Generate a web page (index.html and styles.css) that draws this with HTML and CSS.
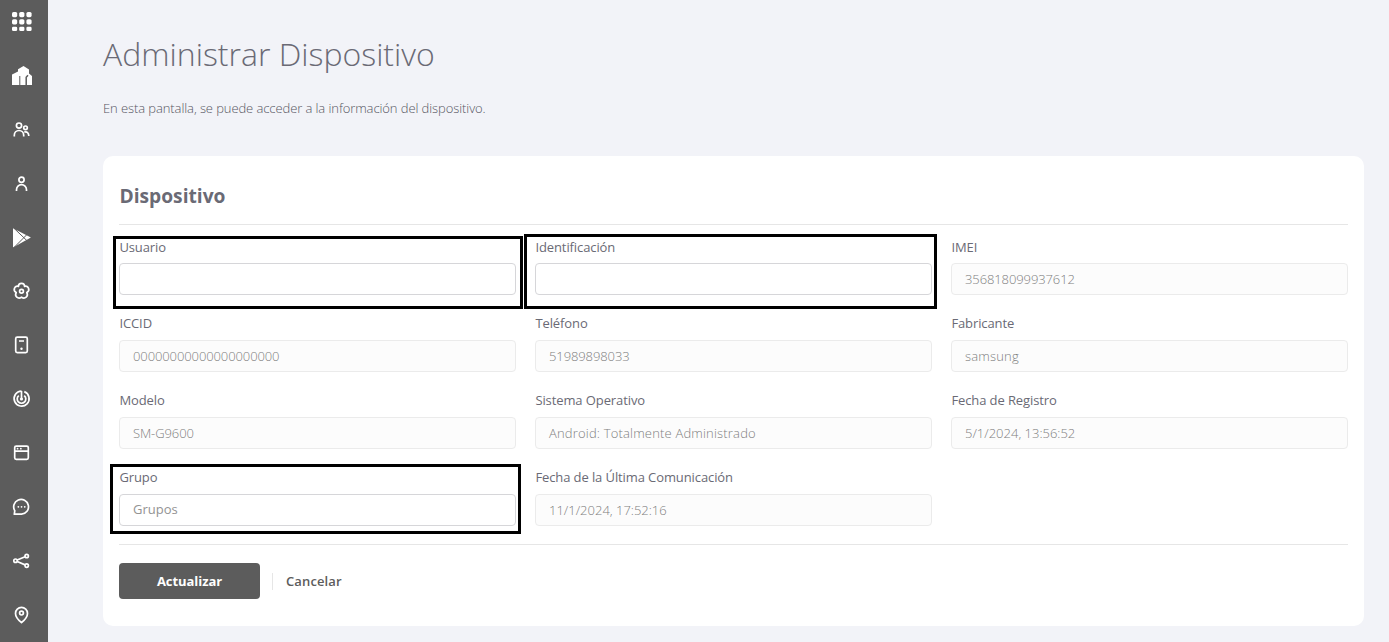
FILE: index.html
```html
<!DOCTYPE html>
<html lang="es">
<head>
<meta charset="utf-8">
<title>Administrar Dispositivo</title>
<link rel="stylesheet" href="styles.css">
</head>
<body>
<div class="app">
  <nav class="sidebar">
    <a class="nav-item"><svg class="icon" viewBox="0 0 24 24"><g class="solid"><rect x="2" y="2" width="5.2" height="5.2" rx="1.6"/><rect x="9.2" y="2" width="5.2" height="5.2" rx="1.6"/><rect x="16.4" y="2" width="5.2" height="5.2" rx="1.6"/><rect x="2" y="9.2" width="5.2" height="5.2" rx="1.6"/><rect x="9.2" y="9.2" width="5.2" height="5.2" rx="1.6"/><rect x="16.4" y="9.2" width="5.2" height="5.2" rx="1.6"/><rect x="2" y="16.7" width="5.2" height="4.4" rx="1.4"/><rect x="9.2" y="16.7" width="5.2" height="4.4" rx="1.4"/><rect x="16.4" y="16.7" width="5.2" height="4.4" rx="1.4"/></g></svg></a>
    <a class="nav-item"><svg class="icon" viewBox="0 0 24 24"><g class="solid"><path d="M2 21V10.500L8 7.500V5.200L13.500 2L19 5.500V9.500L22 12V21Z"/></g><path class="cut" d="M9.800 12V21"/><path class="cut wide" d="M16.200 21V13.200L18 11.300"/></svg></a>
    <a class="nav-item"><svg class="icon shift" viewBox="0 0 24 24"><circle cx="9.500" cy="7.600" r="2.600"/><path d="M4.800 18.600V17.200a4.700 4.700 0 0 1 9.400 0v1.400"/><circle cx="16" cy="9.800" r="1.800"/><path d="M14.800 14.100c2.700-1 4.500.9 4.500 4"/></svg></a>
    <a class="nav-item"><svg class="icon shift" viewBox="0 0 24 24"><circle cx="12" cy="7.800" r="2.600"/><path d="M7 19V17.700a5 5 0 0 1 10 0v1.300"/></svg></a>
    <a class="nav-item"><svg class="icon shift" viewBox="0 0 24 24"><path class="solid" d="M3.500 2.200L21.400 11.600L3.500 21.500Z"/><path class="cut" d="M4 1.800L17.800 15M4 22L17.800 8.200"/></svg></a>
    <a class="nav-item"><svg class="icon shift" viewBox="0 0 24 24"><path d="M8.900 7.400C8.900 3.300 15.100 3.300 15.100 7.400C19 6.200 21 11.600 17.300 13.600C19.300 17.200 15.500 20.500 12 18.200C8.500 20.500 4.700 17.200 6.700 13.600C3 11.600 5 6.200 8.900 7.400Z"/><circle cx="12" cy="12.200" r="1.900"/></svg></a>
    <a class="nav-item"><svg class="icon shift" viewBox="0 0 24 24"><rect x="6.200" y="4.200" width="11.600" height="15.400" rx="1.500"/><path d="M9.500 8H14.500"/><circle class="solid" cx="12" cy="15.800" r="1.200"/></svg></a>
    <a class="nav-item"><svg class="icon shift" viewBox="0 0 24 24"><path d="M12 12V4"/><path d="M14.800 4.600a7.500 7.500 0 1 1-2.800-.5"/><path d="M14.700 8.600a4.300 4.300 0 1 1-5.400 0"/><circle class="solid" cx="12" cy="12" r="1.600"/></svg></a>
    <a class="nav-item"><svg class="icon shift" viewBox="0 0 24 24"><rect x="5.200" y="5.100" width="13.600" height="13.200" rx="1.500"/><path d="M5.200 10.200H18.800"/><path class="dots" d="M8 7.700h.1M11.300 7.700h.1"/></svg></a>
    <a class="nav-item"><svg class="icon shift" viewBox="0 0 24 24"><path d="M4.800 19.200L5.300 15.700A7.400 7.400 0 1 1 12 19.200Z"/><path class="dots" d="M8.800 11.800h.1M12 11.800h.1M15.200 11.800h.1"/></svg></a>
    <a class="nav-item"><svg class="icon shift" viewBox="0 0 24 24"><circle cx="6" cy="11.700" r="1.700"/><circle cx="17.200" cy="7" r="1.700"/><circle cx="17.200" cy="16.600" r="1.700"/><path d="M7.700 11L15.600 7.700M7.700 12.500L15.600 15.900"/></svg></a>
    <a class="nav-item"><svg class="icon shift" viewBox="0 0 24 24"><path d="M12 19.500C8.500 16.700 6 13.700 6 10.400a6 6 0 0 1 12 0c0 3.300-2.500 6.300-6 9.100Z"/><circle cx="12" cy="10.100" r="1.900"/></svg></a>
  </nav>
  <main class="content">
    <h1 class="page-title">Administrar Dispositivo</h1>
    <p class="page-intro">En esta pantalla, se puede acceder a la información del dispositivo.</p>
    <section class="card">
      <h2 class="card-title">Dispositivo</h2>
      <form class="fields">
        <label class="field first"><span class="label">Usuario</span><span class="control"></span><i class="mark mark-user"></i></label>
        <label class="field first"><span class="label">Identificación</span><span class="control"></span><i class="mark mark-id"></i></label>
        <label class="field first"><span class="label">IMEI</span><span class="control disabled">356818099937612</span></label>
        <label class="field"><span class="label">ICCID</span><span class="control disabled">00000000000000000000</span></label>
        <label class="field"><span class="label">Teléfono</span><span class="control disabled">51989898033</span></label>
        <label class="field"><span class="label">Fabricante</span><span class="control disabled words">samsung</span></label>
        <label class="field"><span class="label">Modelo</span><span class="control disabled">SM-G9600</span></label>
        <label class="field"><span class="label">Sistema Operativo</span><span class="control disabled words">Android: Totalmente Administrado</span></label>
        <label class="field"><span class="label">Fecha de Registro</span><span class="control disabled date">5/1/2024, 13:56:52</span></label>
        <label class="field"><span class="label">Grupo</span><span class="control select">Grupos</span><i class="mark mark-group"></i></label>
        <label class="field"><span class="label">Fecha de la Última Comunicación</span><span class="control disabled date">11/1/2024, 17:52:16</span></label>
      </form>
      <div class="actions">
        <button class="submit" type="button">Actualizar</button>
        <a class="cancel">Cancelar</a>
      </div>
    </section>
  </main>
</div>
</body>
</html>
```
FILE: styles.css
```css
* { box-sizing: border-box; }
body {
  margin: 0;
  font-family: "Open Sans", sans-serif;
  font-size: 13px;
  color: #6a6a75;
  background: #f2f3f8;
}
.app { display: flex; height: 642px; overflow: hidden; }
.sidebar {
  width: 48px;
  flex: none;
  padding: 10px 5px 0 0;
  background: #5c5c5c;
  display: flex;
  flex-direction: column;
  gap: 29.9px;
}
.nav-item { height: 24px; display: flex; justify-content: center; flex: none; }
.icon { width: 24px; height: 24px; fill: none; stroke: #fff; stroke-width: 1.7; stroke-linejoin: round; }
.icon.shift { transform: translateX(-0.5px); }
.icon .solid { fill: #fff; stroke: none; }
.icon .cut { stroke: #5c5c5c; stroke-width: 1; }
.icon .wide { stroke-width: 1.5; }
.icon .dots { stroke-linecap: round; }
.content { flex: 1; padding: 30px 25px 0 55px; }
.page-title { margin: 0; font-size: 32px; line-height: 48px; font-weight: 300; }
.page-intro { margin: 20px 0 38px; color: #565662; line-height: 20px; font-weight: 300; letter-spacing: -0.09px; }
.card { height: 470px; padding: 0 16px; border-radius: 10px; background: #fff; }
.card-title {
  margin: 0;
  height: 69px;
  padding: 26px 0 0 0.5px;
  font-size: 19.2px;
  line-height: 28px;
  font-weight: 700;
  border-bottom: 1px solid #e6e6e6;
}
.fields {
  display: grid;
  grid-template-columns: repeat(3, 397px);
  column-gap: 19px;
  grid-auto-rows: 77px;
  height: 320px;
  padding-top: 12px;
  border-bottom: 1px solid #e6e6e6;
}
.field { position: relative; display: block; }
.label { display: block; height: 26px; padding-left: 0.4px; line-height: 18px; letter-spacing: -0.1px; }
.first .label { line-height: 20px; }
.control {
  display: flex;
  align-items: center;
  height: 32px;
  padding: 0 13px;
  border: 1px solid #d6d6d9;
  border-radius: 4px;
  background: #fff;
}
.control.disabled { border-color: #ebebeb; background: #fcfcfc; color: #7f7f7f; font-weight: 300; letter-spacing: -0.1px; }
.control.words { letter-spacing: 0.18px; }
.control.date { letter-spacing: 0; }
.control.select { padding-bottom: 2px; color: #939393; }
.mark { position: absolute; border: 3px solid #000; }
.mark-user { left: -6px; top: -1px; width: 410px; height: 73px; }
.mark-id { left: -11px; top: -3px; width: 413px; height: 75px; }
.mark-group { left: -9px; top: -4px; width: 411px; height: 70px; }
.actions { display: flex; align-items: center; padding-top: 18px; }
.submit {
  width: 141px;
  height: 36px;
  padding: 0;
  border: 0;
  border-radius: 4px;
  background: #5c5c5c;
  color: #fff;
  font: 700 13px "Open Sans", sans-serif;
  letter-spacing: -0.05px;
}
.cancel { margin-left: 12px; padding-left: 13px; border-left: 1px solid #e6e6e6; line-height: 17px; font-weight: 600; letter-spacing: 0.12px; color: #5c5c5c; }
```
